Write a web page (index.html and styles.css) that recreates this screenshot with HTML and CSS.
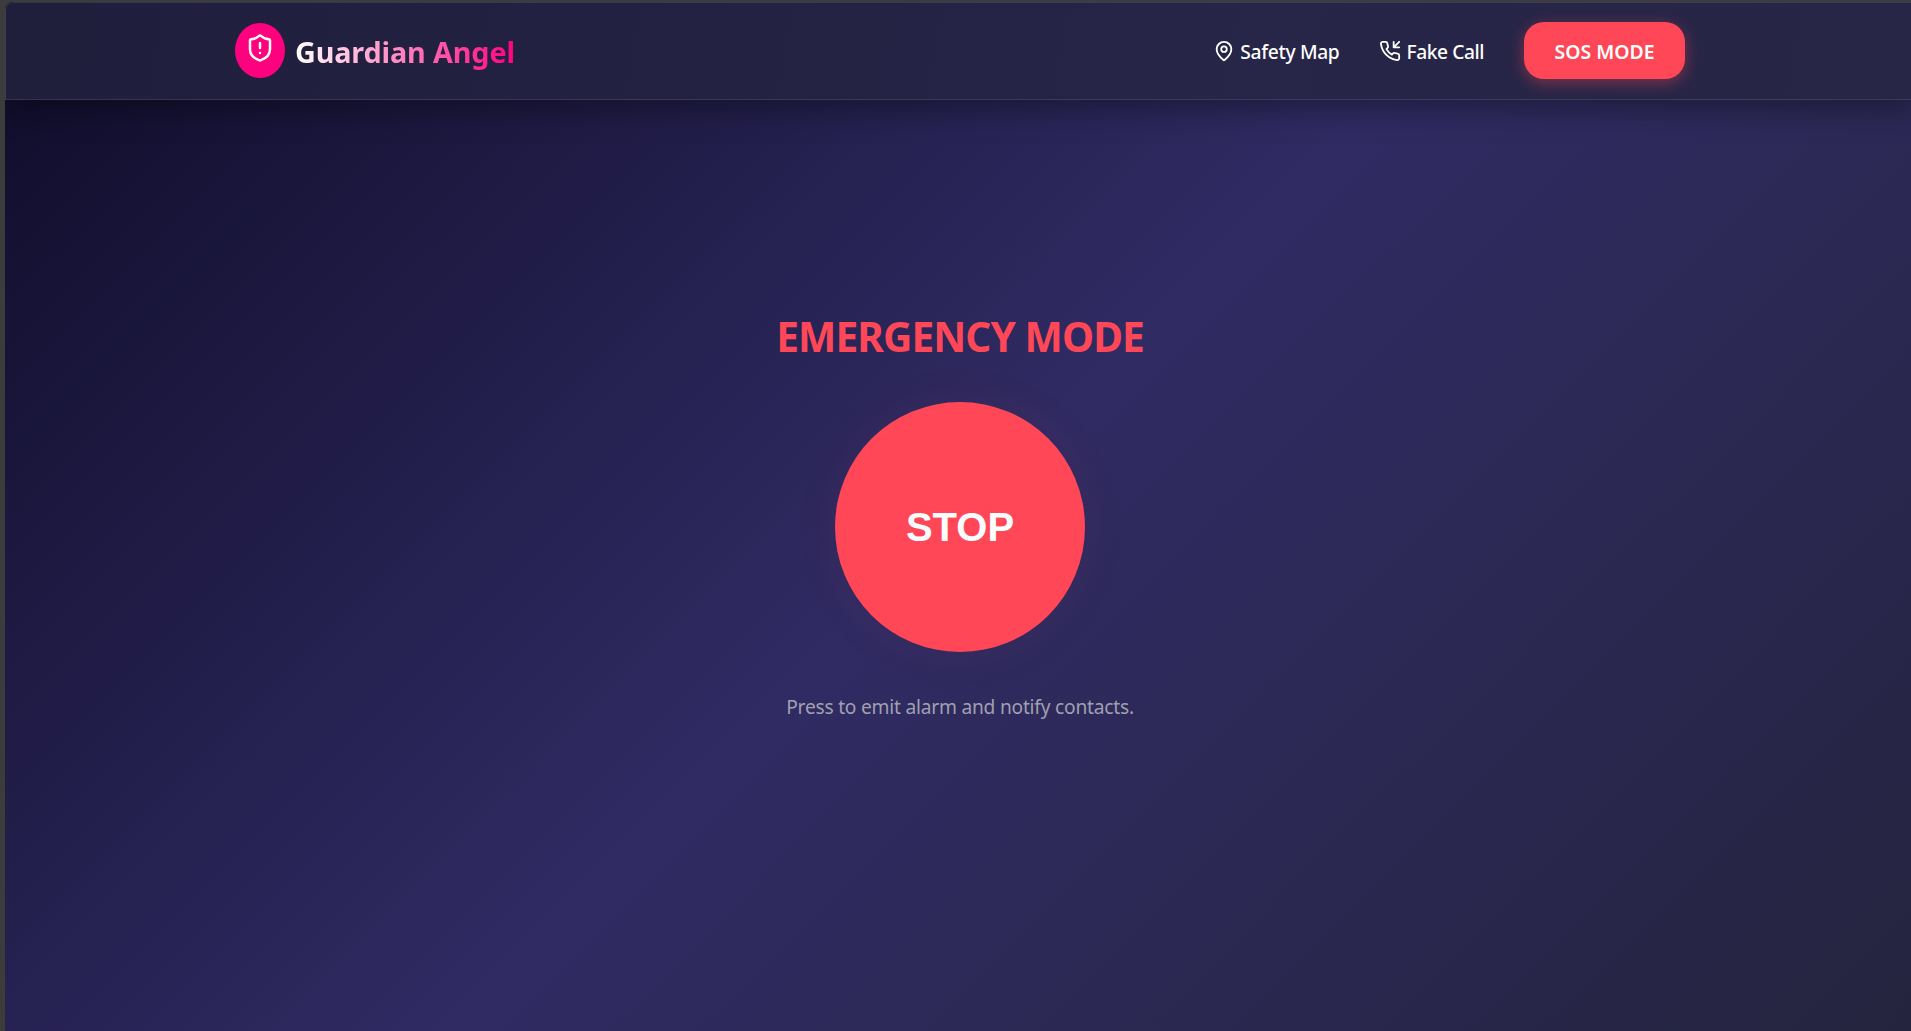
FILE: index.html
```html
<!DOCTYPE html>
<html lang="en">

    <head>
        <meta charset="UTF-8">
        <meta name="viewport" content="width=device-width, initial-scale=1.0">
        <title>Guardian Angel</title>
        <link rel="stylesheet" href="styles.css">
    </head>

    <body>
        <div class="page">
            <header class="navbar">
                <div class="nav-container">
                    <a class="logo" href="#">
                        <span class="logo-icon">
                            <svg class="icon" width="30" height="30" viewBox="0 0 24 24">
                                <path d="M20 13c0 5-3.5 7.5-7.66 8.95a1 1 0 0 1-.67-.01C7.5 20.5 4 18 4 13V6a1 1 0 0 1 1-1c2 0 4.5-1.2 6.24-2.72a1.17 1.17 0 0 1 1.52 0C14.51 3.81 17 5 19 5a1 1 0 0 1 1 1z" />
                                <path d="M12 8v4M12 16h.01" />
                            </svg>
                        </span>
                        <span class="logo-text">Guardian Angel</span>
                    </a>
                    <nav class="nav-links">
                        <a class="nav-link" href="#">
                            <svg class="icon" width="22" height="22" viewBox="0 0 24 24">
                                <path d="M20 10c0 4.993-5.539 10.193-7.399 11.799a1 1 0 0 1-1.202 0C9.539 20.193 4 14.993 4 10a8 8 0 0 1 16 0" />
                                <circle cx="12" cy="10" r="3" />
                            </svg>
                            <span class="map-text">Safety Map</span>
                        </a>
                        <a class="nav-link" href="#">
                            <svg class="icon" width="22" height="22" viewBox="0 0 24 24">
                                <path d="M16 2v6h6M22 2l-6 6" />
                                <path d="M22 16.92v3a2 2 0 0 1-2.18 2 19.79 19.79 0 0 1-8.63-3.07 19.5 19.5 0 0 1-6-6 19.79 19.79 0 0 1-3.07-8.67A2 2 0 0 1 4.11 2h3a2 2 0 0 1 2 1.72 12.84 12.84 0 0 0 .7 2.81 2 2 0 0 1-.45 2.11L8.09 9.91a16 16 0 0 0 6 6l1.27-1.27a2 2 0 0 1 2.11-.45 12.84 12.84 0 0 0 2.81.7A2 2 0 0 1 22 16.92z" />
                            </svg>
                            <span class="call-text">Fake Call</span>
                        </a>
                        <a class="sos-btn" href="#">SOS MODE</a>
                    </nav>
                </div>
            </header>

            <main class="emergency">
                <h1>EMERGENCY MODE</h1>
                <button class="stop-btn">STOP</button>
                <p>Press to emit alarm and notify contacts.</p>
            </main>
        </div>
    </body>

</html>
```
FILE: styles.css
```css
* {
    box-sizing: border-box;
    margin: 0;
    padding: 0;
}

body {
    font-family: "Segoe UI", "Noto Sans", sans-serif;
    height: 1031px;
    padding: 2px 0 0 5px;
    background: #3c3c3c;
    color: #fff;
    overflow: hidden;
}

.page {
    width: 1910px;
    height: 1033px;
    border-radius: 8px 0 0 0;
    overflow: hidden;
    background: linear-gradient(135deg, #0f0c29, #302b63, #24243e);
}

.navbar {
    height: 98px;
    padding-bottom: 2px;
    display: flex;
    justify-content: center;
    align-items: center;
    background: linear-gradient(100deg, #1f1e3b, #22203f 20%, #272548 65%, #282646);
    border: 1px solid rgba(255, 255, 255, 0.1);
    border-radius: 8px 0 0 0;
    box-shadow: 0 8px 32px rgba(0, 0, 0, 0.37);
}

.nav-container {
    width: 1450px;
    display: flex;
    justify-content: space-between;
    align-items: center;
}

.logo {
    display: flex;
    align-items: center;
    gap: 10px;
    color: #fff;
    text-decoration: none;
}

.logo-icon {
    width: 50px;
    height: 55px;
    padding: 10px;
    border-radius: 50%;
    background: #ff007f;
}

.icon {
    display: block;
    flex: none;
    fill: none;
    stroke: #fff;
    stroke-width: 2;
    stroke-linecap: round;
    stroke-linejoin: round;
}

.logo-text {
    padding-top: 3px;
    font-size: 28.8px;
    font-weight: 700;
    letter-spacing: -0.15px;
    white-space: nowrap;
    background: linear-gradient(to right, #fff, #ff007f);
    -webkit-background-clip: text;
    background-clip: text;
    color: transparent;
}

.nav-links {
    display: flex;
    align-items: center;
    gap: 40px;
}

.nav-link {
    display: flex;
    gap: 5px;
    padding-top: 4px;
    color: #fff;
    font-size: 19.2px;
    font-weight: 500;
    line-height: 24px;
    text-decoration: none;
    white-space: nowrap;
}

.map-text {
    letter-spacing: -0.32px;
}

.call-text {
    letter-spacing: -0.42px;
}

.sos-btn {
    width: 161px;
    height: 57px;
    border-radius: 20px;
    background: #ff4757;
    box-shadow: 0 4px 15px rgba(255, 71, 87, 0.4);
    color: #fff;
    font-size: 19.4px;
    font-weight: 600;
    line-height: 60px;
    text-align: center;
    text-decoration: none;
    white-space: nowrap;
}

.emergency {
    display: flex;
    flex-direction: column;
    align-items: center;
    padding-top: 209px;
}

.emergency h1 {
    color: #ff4757;
    font-size: 40.6px;
    font-weight: 700;
    letter-spacing: -0.9px;
    line-height: 56px;
    white-space: nowrap;
}

.stop-btn {
    width: 250px;
    height: 250px;
    margin-top: 37px;
    border: none;
    border-radius: 50%;
    background: #ff4757;
    box-shadow: 0 0 50px rgba(255, 71, 87, 0.06);
    color: #fff;
    font-family: Arial, "Liberation Sans", sans-serif;
    font-size: 40px;
    font-weight: 700;
    cursor: pointer;
}

.emergency p {
    margin-top: 42px;
    color: #a0a0b0;
    font-size: 19.2px;
    letter-spacing: -0.23px;
    line-height: 26px;
    white-space: nowrap;
}
```
